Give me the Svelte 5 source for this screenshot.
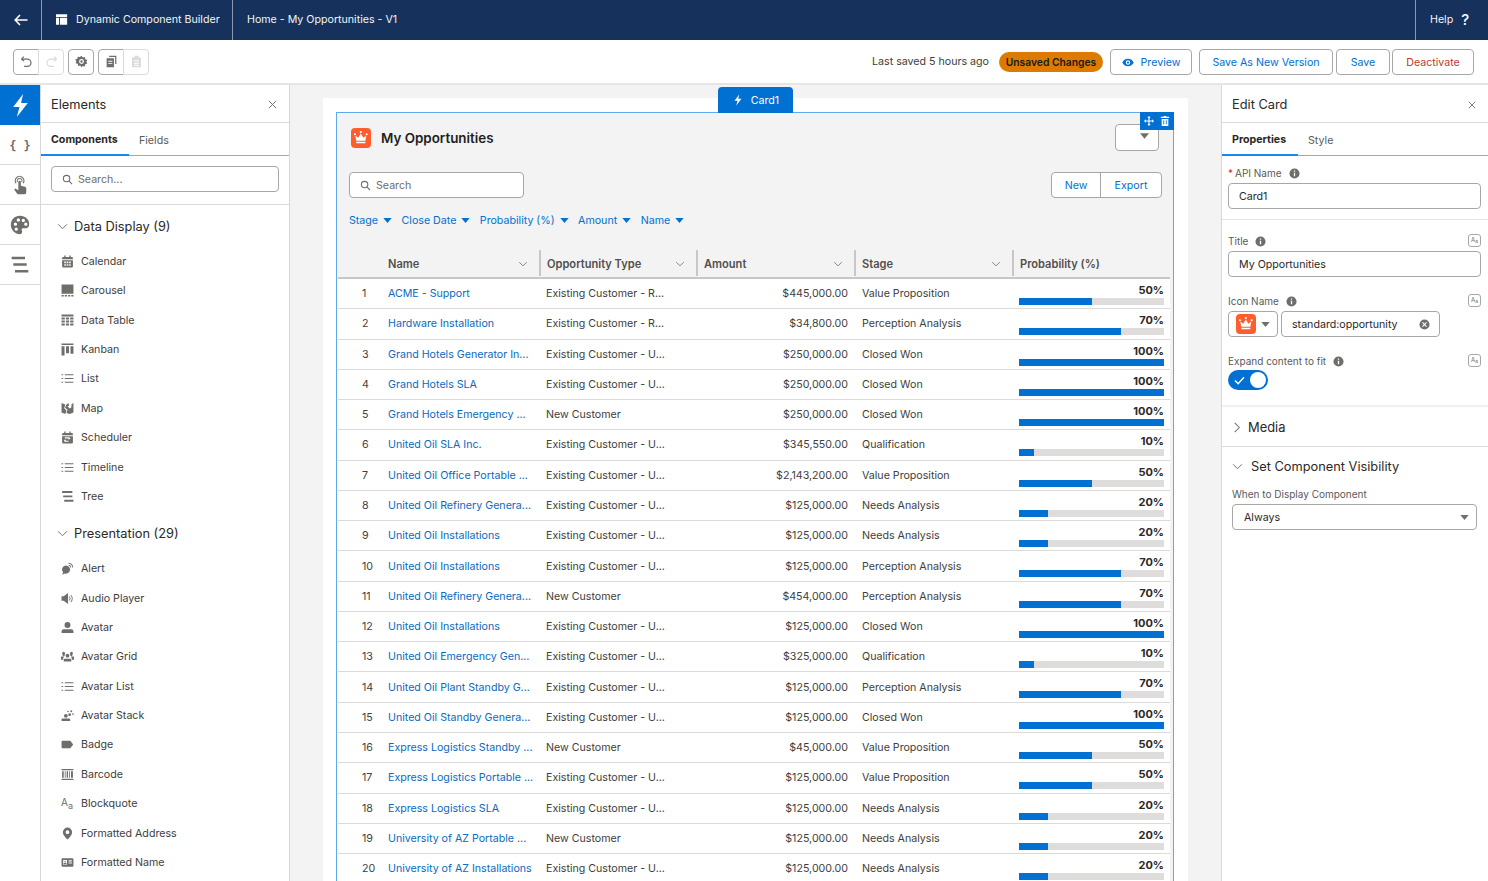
<script>
  const R = 'Existing Customer - R...', U = 'Existing Customer - U...', N = 'New Customer';
  const rows = [
    ['ACME - Support', R, '$445,000.00', 'Value Proposition', 50],
    ['Hardware Installation', R, '$34,800.00', 'Perception Analysis', 70],
    ['Grand Hotels Generator In...', U, '$250,000.00', 'Closed Won', 100],
    ['Grand Hotels SLA', U, '$250,000.00', 'Closed Won', 100],
    ['Grand Hotels Emergency ...', N, '$250,000.00', 'Closed Won', 100],
    ['United Oil SLA Inc.', U, '$345,550.00', 'Qualification', 10],
    ['United Oil Office Portable ...', U, '$2,143,200.00', 'Value Proposition', 50],
    ['United Oil Refinery Genera...', U, '$125,000.00', 'Needs Analysis', 20],
    ['United Oil Installations', U, '$125,000.00', 'Needs Analysis', 20],
    ['United Oil Installations', U, '$125,000.00', 'Perception Analysis', 70],
    ['United Oil Refinery Genera...', N, '$454,000.00', 'Perception Analysis', 70],
    ['United Oil Installations', U, '$125,000.00', 'Closed Won', 100],
    ['United Oil Emergency Gen...', U, '$325,000.00', 'Qualification', 10],
    ['United Oil Plant Standby G...', U, '$125,000.00', 'Perception Analysis', 70],
    ['United Oil Standby Genera...', U, '$125,000.00', 'Closed Won', 100],
    ['Express Logistics Standby ...', N, '$45,000.00', 'Value Proposition', 50],
    ['Express Logistics Portable ...', U, '$125,000.00', 'Value Proposition', 50],
    ['Express Logistics SLA', U, '$125,000.00', 'Needs Analysis', 20],
    ['University of AZ Portable ...', N, '$125,000.00', 'Needs Analysis', 20],
    ['University of AZ Installations', U, '$125,000.00', 'Needs Analysis', 20]
  ];
  const lines = 'M1 4h3v2H1zM7 4h16v2H7zM1 11h3v2H1zM7 11h16v2H7zM1 18h3v2H1zM7 18h16v2H7z';
  const bars = 'M2 2h19v3.5H2zM4 10h17v3.5H4zM6 18h17v3.5H6z';
  const icons = {
    calendar: 'M6 1h2.5v2.5h7V1H18v2.5h2a2 2 0 0 1 2 2V8H2V5.500a2 2 0 0 1 2-2h2zM2 9.500h20V21a2 2 0 0 1-2 2H4a2 2 0 0 1-2-2zM6 12v3h3v-3zM10.500 12v3h3v-3zM15 12v3h3v-3zM6 17v3h3v-3zM10.500 17v3h3v-3zM15 17v3h3v-3z',
    carousel: 'M1 1h22v17H1zM1 20.500h4V23H1zM7 20.500h4V23H7zM13 20.500h4V23h-4zM19 20.500h4V23h-4z',
    table: 'M1 1h22v3.500H1zM1 6.500h6V10H1zM9 6.500h6V10H9zM17 6.500h6V10h-6zM1 12h6v3.500H1zM9 12h6v3.500H9zM17 12h6v3.500h-6zM1 17.500h6V21H1zM9 17.500h6V21H9zM17 17.500h6V21h-6z',
    kanban: 'M1 1h22v2.500H1zM1 6h5.500v17H1zM9.300 6h5.500v13H9.300zM17.500 6H23v14h-5.500z',
    list: lines,
    map: 'M1 2l7 2.500-2 7 4 4-2 6.500-7-2.500zM10 4.500l4-2 1 4.500-3 1 4 4 3-2 .5-6L23 2v17.500L16 22l-6-1.500 2-6-4.500-4z',
    scheduler: 'M6 1h2.500v2.500h7V1H18v2.500h2a2 2 0 0 1 2 2V8H2V5.500a2 2 0 0 1 2-2h2zM2 9.500h20V21a2 2 0 0 1-2 2H4a2 2 0 0 1-2-2zM7 11.500v2.500h7v2.500l4-3.500-4-1.500zM6 16v4h8v-2H9v-2z',
    tree: bars,
    alert: 'M9 6.500a8 7.500 0 1 1-2.500 14.700L2.500 23.500l1.200-4.500A7.500 7.500 0 0 1 9 6.500zM14 1.500a9 9 0 0 1 8.500 8.500l-1.800.2A7.200 7.200 0 0 0 14 3.300zM14 5a5.500 5.500 0 0 1 5 5l-1.800.2A3.800 3.800 0 0 0 14 6.800z',
    audio: 'M1 8h4l8-6v20l-8-6H1zM15.500 8a5 5 0 0 1 0 8l-1-1.300a3.500 3.500 0 0 0 0-5.400zM18.500 5a9.500 9.500 0 0 1 0 14l-1-1.200a8 8 0 0 0 0-11.600z',
    avatar: 'M12 2a5.500 5.500 0 1 1 0 11 5.500 5.500 0 0 1 0-11zM5 15h14a4 4 0 0 1 4 4v3H1v-3a4 4 0 0 1 4-4z',
    grid: 'M12 7a3.500 3.500 0 1 1 0 7 3.500 3.500 0 0 1 0-7zM7 16h10a2 2 0 0 1 2 2v3H5v-3a2 2 0 0 1 2-2zM4.500 3a3 3 0 0 1 3 3l-1 5H3.500L2 6a3 3 0 0 1 2.500-3zM0 12h6l-2 3v3H0zM19.500 3a3 3 0 0 1 2.500 3l-1.500 5h-3l-1-5a3 3 0 0 1 3-3zM18 12h6v6h-4v-3z',
    stack: 'M9 9a3.500 3.500 0 1 1 0 7 3.500 3.500 0 0 1 0-7zM3 17.500h12a2 2 0 0 1 2 2V22H1v-2.500a2 2 0 0 1 2-2zM16 8a2.500 2.500 0 1 1 0 5 2.500 2.500 0 0 1 0-5zM19 2.500a1.800 1.800 0 1 1 0 3.600 1.800 1.800 0 0 1 0-3.600zM22 8a1.500 1.500 0 1 1 0 3 1.500 1.500 0 0 1 0-3zM13 3a1.500 1.500 0 1 1 0 3 1.500 1.500 0 0 1 0-3z',
    badge: 'M3 5h13a2 2 0 0 1 1.500.7l5 6.300-5 6.300a2 2 0 0 1-1.500.7H3a2 2 0 0 1-2-2V7a2 2 0 0 1 2-2z',
    barcode: 'M1 2h22v2H1zM1 20h22v2H1zM2 6h3v12H2zM7 6h1.500v12H7zM10.500 6H13v12h-2.500zM15 6h1.500v12H15zM18.500 6H22v12h-3.500z',
    pin: 'M12 1a8.500 8.500 0 0 1 8.500 8.500C20.500 15 14 21 12 23 10 21 3.500 15 3.500 9.500A8.500 8.500 0 0 1 12 1zM12 6a3.500 3.500 0 1 0 0 7 3.500 3.500 0 0 0 0-7z',
    name: 'M3 4h18a2 2 0 0 1 2 2v12a2 2 0 0 1-2 2H3a2 2 0 0 1-2-2V6a2 2 0 0 1 2-2zM4 7.500V16h7V7.500zM14 8v2h6V8zM14 12v2h6v-2zM7.500 9a1.500 1.500 0 1 1 0 3 1.500 1.500 0 0 1 0-3zM5 13h5v2H5z'
  };
  const dataDisplay = [['Calendar','calendar'],['Carousel','carousel'],['Data Table','table'],['Kanban','kanban'],['List','list'],['Map','map'],['Scheduler','scheduler'],['Timeline','list'],['Tree','tree']];
  const presentation = [['Alert','alert'],['Audio Player','audio'],['Avatar','avatar'],['Avatar Grid','grid'],['Avatar List','list'],['Avatar Stack','stack'],['Badge','badge'],['Barcode','barcode'],['Blockquote',null],['Formatted Address','pin'],['Formatted Name','name']];
  const bolt = 'M14.500 1 5 13.500h6L8.500 23 19 9.500h-6.500z';
  const filters = ['Stage','Close Date','Probability (%)','Amount','Name'];
  const cols = ['Name','Opportunity Type','Amount','Stage','Probability (%)'];
</script>

{#snippet crown(cls)}
  <span class="crown {cls}">
    <svg viewBox="0 0 24 24"><path fill="#fff" d="M3.500 8.500L8 12l4-6.500L16 12l4.500-3.500L19 16.500H5zM5 18h14v2.500H5zM12 1.500a1.700 1.700 0 1 1 0 3.400 1.700 1.700 0 0 1 0-3.400zM3 5a1.600 1.600 0 1 1 0 3.200A1.600 1.600 0 0 1 3 5zM21 5a1.600 1.600 0 1 1 0 3.200A1.600 1.600 0 0 1 21 5z"/></svg>
  </span>
{/snippet}
{#snippet search()}
  <svg class="search-ico" viewBox="0 0 24 24"><circle cx="10" cy="10" r="7" fill="none" stroke="#706e6b" stroke-width="2.400"/><path d="M15 15l7 7" stroke="#706e6b" stroke-width="2.400"/></svg>
{/snippet}
{#snippet chev(cls)}
  <svg class="chev {cls}" viewBox="0 0 12 8"><path d="M1 1.500l5 5 5-5" fill="none" stroke="#706e6b" stroke-width="1.100"/></svg>
{/snippet}
{#snippet caret(cls)}
  <svg class="caret {cls}" viewBox="0 0 10 6"><path d="M0 0h10L5 6z"/></svg>
{/snippet}
{#snippet info()}
  <svg class="info" viewBox="0 0 12 12"><circle cx="6" cy="6" r="5.500" fill="#706e6b"/><path d="M5.300 5.200h1.400v3.800H5.300zM5.300 2.800h1.400v1.400H5.300z" fill="#fff"/></svg>
{/snippet}
{#snippet fx()}
  <span class="fx"><span>A</span><span class="fx-s">a</span></span>
{/snippet}
{#snippet close(cls)}
  <svg class="close {cls}" viewBox="0 0 10 10"><path d="M1 1l8 8M9 1L1 9" stroke="#706e6b" stroke-width="1.100"/></svg>
{/snippet}
{#snippet items(list)}
  <ul class="items">
    {#each list as [label, ic]}
      <li>
        {#if ic}
          <svg class="item-ico" viewBox="0 0 24 24"><path fill="#706e6b" fill-rule="evenodd" d={icons[ic]}/></svg>
        {:else}
          <span class="aa"><span>A</span><span class="aa-s">a</span></span>
        {/if}
        <span>{label}</span>
      </li>
    {/each}
  </ul>
{/snippet}

<div class="app">
  <header class="topbar">
    <button class="back" aria-label="Back">
      <svg viewBox="0 0 14 12"><path d="M6 1L1.200 6 6 11M1.500 6H13.500" fill="none" stroke="#fff" stroke-width="1.600"/></svg>
    </button>
    <div class="app-name">
      <svg viewBox="0 0 14 12"><path fill="#fff" fill-rule="evenodd" d="M0 0h13v3H0zM0 4h3.500v8H0zM4.500 4H13v8H4.500z"/></svg>
      <span>Dynamic Component Builder</span>
    </div>
    <div class="page-name">Home - My Opportunities - V1</div>
    <div class="help"><span>Help</span><span class="q">?</span></div>
  </header>

  <div class="toolbar">
    <div class="tool-left">
      <div class="btn-group">
        <button class="tool" aria-label="Undo"><svg viewBox="0 0 16 16"><path d="M4.500 2L2 5l3 2.500M2.500 5H9a4.500 4.500 0 0 1 0 9H5" fill="none" stroke="#706e6b" stroke-width="1.500"/></svg></button>
        <button class="tool off" aria-label="Redo"><svg viewBox="0 0 16 16"><path d="M11.500 2L14 5l-3 2.500M13.500 5H7a4.500 4.500 0 0 0 0 9h4" fill="none" stroke="#dddbda" stroke-width="1.500"/></svg></button>
      </div>
      <button class="tool solo" aria-label="Settings"><svg viewBox="0 0 16 16"><path fill="#706e6b" fill-rule="evenodd" d="M8 .8l1.500 2.200 2.600-.4.500 2.600 2.600 .8-1.200 2.300 1.200 2.300-2.600.8-.5 2.600-2.600-.4L8 15.200l-1.500-2.200-2.600.4-.5-2.600-2.600-.8L1.500 7.700.3 5.400l2.600-.8.500-2.600 2.600.4zM8 5a3 3 0 1 0 0 6 3 3 0 0 0 0-6zm0 1.500a1.500 1.500 0 1 1 0 3 1.500 1.500 0 0 1 0-3z"/></svg></button>
      <div class="btn-group">
        <button class="tool" aria-label="Copy"><svg viewBox="0 0 16 16"><path fill="#706e6b" fill-rule="evenodd" d="M5 1h9v10h-1.500V2.500H5zM2 4h9v11H2zM4 7v1.200h5V7zM4 10v1.200h5V10z"/></svg></button>
        <button class="tool off" aria-label="Paste"><svg viewBox="0 0 16 16"><path fill="#dddbda" fill-rule="evenodd" d="M5.500 1h5v2h3v12h-11V3h3zM5 6.500v1.200h6V6.500zM5 9.500v1.200h6V9.500zM5 12v1.200h6V12z"/></svg></button>
      </div>
    </div>
    <div class="tool-right">
      <span class="saved">Last saved 5 hours ago</span>
      <span class="unsaved">Unsaved Changes</span>
      <button class="btn preview"><svg viewBox="0 0 16 12"><path fill="#0070d2" fill-rule="evenodd" d="M8 1c3.500 0 6.300 2.200 7.500 5-1.200 2.800-4 5-7.500 5S1.700 8.800.5 6C1.700 3.200 4.500 1 8 1zm0 2a3 3 0 1 0 0 6 3 3 0 0 0 0-6zm0 1.500a1.500 1.500 0 1 1 0 3 1.500 1.500 0 0 1 0-3z"/></svg>Preview</button>
      <button class="btn saveas">Save As New Version</button>
      <button class="btn save">Save</button>
      <button class="btn deact">Deactivate</button>
    </div>
  </div>

  <div class="main">
    <nav class="rail">
      <div class="rail-item active"><svg class="bolt" viewBox="0 0 24 24"><path fill="#fff" d={bolt}/></svg></div>
      <div class="rail-item"><span class="braces">{'{ }'}</span></div>
      <div class="rail-item"><svg viewBox="0 0 24 24"><path fill="#706e6b" fill-rule="evenodd" d="M11.500 7a1.500 1.500 0 0 1 1.500 1.500V13l5 1.200a2 2 0 0 1 1.500 2V21a2 2 0 0 1-2 2H10a2 2 0 0 1-1.600-.800L5 17.500l1.200-1.200 3.800 2V8.500A1.500 1.500 0 0 1 11.500 7zM11.500 1a6 6 0 0 1 5 9.300l-1.300-.8a4.500 4.500 0 1 0-7.400 0l-1.300.8A6 6 0 0 1 11.500 1zM11.500 3.500a3.500 3.500 0 0 1 3 5.300l-1-.7a2.300 2.300 0 1 0-4 0l-1 .7a3.500 3.500 0 0 1 3-5.300z"/></svg></div>
      <div class="rail-item"><svg viewBox="0 0 24 24"><path fill="#706e6b" fill-rule="evenodd" d="M12 1c6.500 0 11 4.500 11 10 0 3.500-2.500 5-5 5h-2.500c-1.500 0-2 1.500-1.200 2.700.8 1.300.2 4.300-2.300 4.300C6 23 1 18 1 12S5.500 1 12 1zM6.500 9a2 2 0 1 0 0 4 2 2 0 0 0 0-4zM10 4a2 2 0 1 0 0 4 2 2 0 0 0 0-4zM16 4.500a2 2 0 1 0 0 4 2 2 0 0 0 0-4zM19 9a2 2 0 1 0 0 4 2 2 0 0 0 0-4zM7.500 15a2 2 0 1 0 0 4 2 2 0 0 0 0-4z"/></svg></div>
      <div class="rail-item"><svg viewBox="0 0 24 24"><path fill="#706e6b" d="M2 2h16v3H2zM4 10h16v3H4zM6 18h16v3H6z"/></svg></div>
    </nav>

    <aside class="elements">
      <div class="panel-head"><h2>Elements</h2>{@render close('')}</div>
      <div class="tabs"><span class="tab on comp">Components</span><span class="tab">Fields</span></div>
      <div class="el-search">
        <div class="input">{@render search()}<span class="ph">Search...</span></div>
      </div>
      <div class="el-list">
        <div class="section">{@render chev('sec')}<span>Data Display (9)</span></div>
        {@render items(dataDisplay)}
        <div class="section second">{@render chev('sec')}<span>Presentation (29)</span></div>
        {@render items(presentation)}
      </div>
    </aside>

    <section class="canvas">
      <div class="sheet">
        <div class="card">
          <div class="card-tab"><svg viewBox="0 0 24 24"><path fill="#fff" d={bolt}/></svg>Card1</div>
          <div class="card-actions">
            <svg viewBox="0 0 12 12"><path fill="#fff" d="M6 0l2 2.200H6.700v3.100h3.100V4L12 6 9.800 8V6.700H6.700v3.100H8L6 12 4 9.800h1.300V6.700H2.200V8L0 6l2.200-2v1.300h3.100V2.200H4z"/></svg>
            <svg viewBox="0 0 12 12"><path fill="#fff" fill-rule="evenodd" d="M4.500 0h3v1H11v1.500H1V1h3.500zM2 3.500h8V12H2zM4 5v5h1V5zM7 5v5h1V5z"/></svg>
          </div>
          <div class="card-head">
            {@render crown('big')}
            <h3>My Opportunities</h3>
            <div class="menu-btn">{@render caret('menu-caret')}</div>
          </div>
          <div class="card-tools">
            <div class="input card-search">{@render search()}<span class="ph">Search</span></div>
            <div class="new-export"><span>New</span><span>Export</span></div>
          </div>
          <div class="filters">
            {#each filters as f}
              <span class="filter">{f}{@render caret('blue')}</span>
            {/each}
          </div>
          <div class="table">
            <div class="thead">
              <div class="th num"></div>
              {#each cols as c, i}
                <div class="th" class:sep={i > 0}>
                  <span>{c}</span>
                  {#if i < 4}{@render chev('th-chev')}{/if}
                </div>
              {/each}
            </div>
            {#each rows as r, i}
              <div class="tr">
                <div class="td num">{i + 1}</div>
                <div class="td link">{r[0]}</div>
                <div class="td">{r[1]}</div>
                <div class="td amount">{r[2]}</div>
                <div class="td stage">{r[3]}</div>
                <div class="td prob">
                  <span class="pct">{r[4]}%</span>
                  <span class="bar"><span class="fill" style="width:{r[4]}%"></span></span>
                </div>
              </div>
            {/each}
          </div>
        </div>
      </div>
    </section>

    <aside class="props">
      <div class="panel-head right"><h2>Edit Card</h2>{@render close('small')}</div>
      <div class="tabs right"><span class="tab on prop">Properties</span><span class="tab">Style</span></div>
      <div class="group first">
        <div class="label"><span class="req">*</span>API Name {@render info()}</div>
        <div class="input val">Card1</div>
      </div>
      <div class="group second">
        <div class="label spread"><span class="lab">Title {@render info()}</span>{@render fx()}</div>
        <div class="input val">My Opportunities</div>
        <div class="label spread icon-label"><span class="lab">Icon Name {@render info()}</span>{@render fx()}</div>
        <div class="icon-row">
          <div class="icon-pick">{@render crown('mid')}{@render caret('')}</div>
          <div class="input icon-val"><span>standard:opportunity</span>
            <svg class="clear" viewBox="0 0 12 12"><circle cx="6" cy="6" r="5.500" fill="#706e6b"/><path d="M3.800 3.800l4.400 4.400M8.200 3.800L3.800 8.200" stroke="#fff" stroke-width="1.200"/></svg>
          </div>
        </div>
        <div class="label spread expand"><span class="lab">Expand content to fit {@render info()}</span>{@render fx()}</div>
        <div class="toggle">
          <svg viewBox="0 0 12 10"><path d="M1 5l3.500 3.500L11 1.500" fill="none" stroke="#fff" stroke-width="1.600"/></svg>
          <span class="knob"></span>
        </div>
      </div>
      <div class="media">
        <svg class="media-chev" viewBox="0 0 8 12"><path d="M1.500 1l5 5-5 5" fill="none" stroke="#706e6b" stroke-width="1.100"/></svg>
        <span>Media</span>
      </div>
      <div class="visibility">
        <div class="vis-head">{@render chev('sec')}<span>Set Component Visibility</span></div>
        <div class="label when">When to Display Component</div>
        <div class="input select"><span>Always</span>{@render caret('')}</div>
      </div>
    </aside>
  </div>
</div>

<style>
  :global(body) { margin: 0; background: #fff; }
  * { box-sizing: border-box; }
  .app {
    height: 881px; width: 1488px; overflow: hidden; display: flex; flex-direction: column;
    font-family: Inter, "Liberation Sans", sans-serif; font-size: 10.650px; color: #3e3e3c;
  }
  button { font: inherit; background: #fff; cursor: pointer; padding: 0; }
  h2, h3 { margin: 0; font-weight: 400; }
  ul { list-style: none; margin: 0; padding: 0; }

  .topbar { height: 40px; background: #16325c; color: #f3f2f2; display: flex; align-items: stretch; flex: none; }
  .back { width: 42px; background: none; border: 0; border-right: 1px solid #8a99b0; display: flex; align-items: center; justify-content: center; }
  .back svg { width: 14px; height: 12px; }
  .app-name { width: 191px; display: flex; align-items: center; gap: 8px; padding: 0 0 2px 14px; border-right: 1px solid #8a99b0; }
  .app-name svg { width: 12px; height: 11px; }
  .page-name { flex: 1; display: flex; align-items: center; padding: 0 0 2px 14px; }
  .help { width: 73px; border-left: 1px solid #8a99b0; display: flex; align-items: center; padding: 0 0 2px 14px; gap: 8px; }
  .q { font-size: 15px; font-weight: 500; color: #fff; }

  .toolbar { height: 45px; flex: none; display: flex; align-items: center; justify-content: space-between; padding: 0 14px 0 13px; border-bottom: 2px solid #e5e5e5; }
  .tool-left { display: flex; gap: 4px; }
  .btn-group { display: flex; }
  .tool { width: 26px; height: 26px; border: 1px solid #a8a7a5; border-radius: 4px; display: flex; align-items: center; justify-content: center; }
  .tool svg { width: 13px; height: 13px; }
  .btn-group .tool:first-child { border-radius: 4px 0 0 4px; }
  .btn-group .tool:last-child { border-radius: 0 4px 4px 0; margin-left: -1px; }
  .tool.off { border-color: #dddbda; }
  .tool-right { display: flex; align-items: center; }
  .saved { margin-right: 10px; }
  .unsaved { width: 104px; height: 20px; border-radius: 10px; background: #dd7a01; color: #1a1a1a; font-weight: 600; display: flex; align-items: center; justify-content: center; margin-right: 7px; font-size: 10.300px; }
  .btn { height: 26px; border: 1px solid #a8a7a5; border-radius: 4px; color: #0070d2; display: flex; align-items: center; justify-content: center; padding-top: 1px; }
  .preview { width: 82px; gap: 7px; margin-right: 7px; }
  .preview svg { width: 12px; height: 9px; }
  .saveas { width: 134px; margin-right: 3px; }
  .save { width: 54px; margin-right: 2px; }
  .deact { width: 82px; color: #c23934; }

  .main { flex: 1; display: flex; min-height: 0; }
  .rail { width: 41px; flex: none; border-right: 1px solid #d8d8d8; display: flex; flex-direction: column; }
  .rail-item { width: 40px; height: 40px; border-bottom: 1px solid #dddbda; display: flex; align-items: center; justify-content: center; }
  .rail-item svg { width: 20px; height: 20px; }
  .rail-item svg.bolt { width: 25px; height: 25px; }
  .rail-item.active { background: #0070d2; border: 0; }
  .braces { font-family: "DejaVu Sans Mono", monospace; font-weight: 700; font-size: 12px; color: #706e6b; padding-top: 2px; }

  .elements { width: 249px; flex: none; border-right: 1px solid #d8d8d8; display: flex; flex-direction: column; }
  .panel-head { height: 38px; padding: 2px 12px 0 10px; border-bottom: 1px solid #dddbda; display: flex; align-items: center; justify-content: space-between; flex: none; }
  .panel-head h2 { font-size: 12.800px; color: #2b2826; }
  .close { width: 9px; height: 9px; }
  .close.small { width: 8px; height: 8px; }
  .tabs { height: 33px; border-bottom: 1px solid #a8a7a5; display: flex; flex: none; color: #5a5a58; }
  .tab { height: 33px; display: flex; align-items: center; padding: 2px 0 0 10px; }
  .tab.on { font-weight: 700; color: #2b2826; border-bottom: 2px solid #1589ee; }
  .tab.comp { width: 88px; }
  .tab.prop { width: 76px; }
  .input { height: 26px; border: 1px solid #a8a7a5; border-radius: 4px; background: #fff; display: flex; align-items: center; }
  .search-ico { width: 11px; height: 11px; margin: 0 5px 0 10px; }
  .ph { color: #706e6b; }
  .el-search { height: 49px; padding: 10px 10px 0; border-bottom: 1px solid #dddbda; flex: none; }
  .el-list { padding-left: 16px; flex: 1; overflow: hidden; }
  .section { display: flex; align-items: center; gap: 6px; font-size: 12.800px; color: #2b2826; height: 20px; margin-top: 11px; }
  .section.second { margin-top: 12px; }
  .chev { width: 11px; height: 7px; flex: none; }
  .section + .items { margin-top: 10.500px; }
  .items li { height: 29.450px; display: flex; align-items: center; gap: 8px; padding-left: 4px; }
  .section.second + .items { margin-top: 10.500px; }
  .section.second + .items li { height: 29.400px; }
  .item-ico { width: 13px; height: 13px; flex: none; margin-right: -1px; }
  .aa { width: 12px; height: 14px; display: flex; color: #706e6b; font-size: 10px; line-height: 10px; flex: none; }
  .aa-s { align-self: flex-end; font-size: 9px; }

  .canvas { width: 931px; flex: none; background: #f3f3f3; padding: 13px 33px 0 33px; overflow: hidden; }
  .sheet { background: #fff; height: 800px; padding: 14px 14px 0 13px; }
  .card { position: relative; height: 790px; background: #f3f3f3; border: 1.500px solid #5eaaee; padding: 0 2px 0 1px; }
  .card-tab { position: absolute; left: 381px; top: -26px; width: 75px; height: 26px; background: #0070d2; border-radius: 4px 4px 0 0; color: #fff; display: flex; align-items: center; justify-content: center; gap: 7px; }
  .card-tab svg { width: 12px; height: 12px; }
  .card-actions { position: absolute; right: -1px; top: -1px; width: 34px; height: 18px; background: #0070d2; display: flex; align-items: center; justify-content: center; gap: 6px; z-index: 1; }
  .card-actions svg { width: 10px; height: 10px; }
  .card-head { height: 57px; padding: 0 12px 0 13px; display: flex; align-items: center; }
  .crown { background: #ff5d2d; border-radius: 4px; display: flex; align-items: center; justify-content: center; flex: none; }
  .crown svg { width: 78%; height: 78%; }
  .crown.big { width: 20px; height: 20px; margin-top: -8px; }
  .crown.mid { width: 20px; height: 20px; }
  .card-head h3 { font-size: 13.400px; font-weight: 600; color: #1f1f1e; margin-left: 10px; flex: 1; margin-top: -8px; }
  .menu-btn { width: 44px; height: 27px; border: 1px solid #a8a7a5; border-radius: 4px; background: #fff; display: flex; align-items: center; justify-content: flex-end; padding: 0 9px 4px 0; margin-top: -8px; }
  .caret { width: 9px; height: 5px; fill: #706e6b; flex: none; }
  .menu-caret { width: 9px; height: 6px; }
  .card-tools { display: flex; justify-content: space-between; padding: 2px 9px 0 11px; }
  .card-search { width: 175px; }
  .new-export { display: flex; width: 111px; height: 26px; border: 1px solid #a8a7a5; border-radius: 4px; background: #fff; color: #0070d2; }
  .new-export span { display: flex; align-items: center; justify-content: center; }
  .new-export span:first-child { width: 49px; border-right: 1px solid #a8a7a5; }
  .new-export span:last-child { flex: 1; }
  .filters { display: flex; gap: 9.500px; padding: 0 0 0 11px; height: 44px; align-items: center; color: #0070d2; }
  .filter { display: flex; align-items: center; gap: 5px; }
  .caret.blue { fill: #0070d2; }
  .table { margin-top: 8px; width: 832px; }
  .thead, .tr { display: grid; grid-template-columns: 42px 159px 157px 158px 158px 158px; }
  .thead { height: 29px; border-bottom: 2px solid #c9c7c5; }
  .th { display: flex; align-items: center; justify-content: space-between; font-weight: 600; font-size: 11.100px; color: #514f4d; padding: 0 11px 0 8px; position: relative; }
  .th.sep::before { content: ""; position: absolute; left: 0; top: 0; bottom: 1px; width: 1.500px; background: #c9c7c5; }
  .th.num { padding: 0; }
  .th-chev { width: 10px; height: 6px; }
  .tr { height: 30.280px; background: #fff; border-bottom: 1px solid #dddbda; }
  .td { display: flex; align-items: center; padding: 0 7px; white-space: nowrap; color: #3e3e3c; }
  .td.num { justify-content: flex-start; padding: 0 0 0 24px; }
  .td.link { color: #0b6ac0; padding-left: 8px; }
  .td.amount { justify-content: flex-end; padding-right: 6px; }
  .td.stage { padding-left: 8px; }
  .td.prob { flex-direction: column; align-items: stretch; justify-content: flex-start; padding: 5px 6px 0 7px; }
  .pct { text-align: right; font-weight: 700; color: #2b2826; line-height: 13px; height: 14px; font-size: 11px; }
  .bar { display: block; height: 7px; background: #dfdcdc; }
  .fill { display: block; height: 7px; background: #0070d2; }

  .props { width: 267px; flex: none; border-left: 1px solid #d8d8d8; display: flex; flex-direction: column; }
  .tabs.right { color: #5a5a58; }
  .label { display: flex; align-items: center; color: #5a5a58; font-size: 10px; height: 14px; gap: 4px; }
  .req { color: #c23934; margin-right: -2px; }
  .info { width: 11px; height: 11px; margin-left: 3px; }
  .spread { justify-content: space-between; }
  .lab { display: flex; align-items: center; gap: 4px; }
  .group { padding: 0 7px 0 6px; }
  .group.first { height: 64px; padding-top: 10px; border-bottom: 1px solid #e5e5e5; }
  .val { margin-top: 3px; padding-left: 10px; color: #2b2826; }
  .group.second { height: 187px; border-bottom: 2px solid #f0f0f0; padding-top: 14px; }
  .fx { width: 13px; height: 13px; border: 1px solid #a8a7a5; border-radius: 3px; display: flex; align-items: center; justify-content: center; font-size: 6px; line-height: 6px; color: #706e6b; margin-top: -2px; }
  .fx-s { font-size: 5px; margin-top: 2px; }
  .icon-label { margin-top: 17px; }
  .icon-row { display: flex; gap: 3px; margin-top: 3px; }
  .icon-pick { width: 50px; height: 26px; border: 1px solid #a8a7a5; border-radius: 4px; background: #fff; display: flex; align-items: center; gap: 5px; padding-left: 7px; }
  .icon-val { width: 159px; padding: 0 9px 0 10px; justify-content: space-between; color: #2b2826; }
  .clear { width: 11px; height: 11px; }
  .expand { margin-top: 17px; }
  .toggle { margin-top: 2px; width: 40px; height: 20px; border-radius: 10px; background: #0070d2; position: relative; display: flex; align-items: center; padding-left: 6px; }
  .toggle svg { width: 11px; height: 9px; }
  .knob { position: absolute; right: 2px; top: 2px; width: 16px; height: 16px; border-radius: 50%; background: #fff; }
  .media { height: 40px; border-bottom: 1px solid #dddbda; display: flex; align-items: center; padding: 2px 0 0 11px; gap: 7px; font-size: 12.900px; color: #2b2826; }
  .media-chev { width: 8px; height: 11px; }
  .visibility { padding: 9px 10px 0 10px; }
  .vis-head { display: flex; align-items: center; gap: 8px; font-size: 12.800px; color: #2b2826; height: 20px; }
  .when { margin-top: 11px; }
  .select { margin-top: 3px; width: 245px; padding: 0 7px 0 11px; justify-content: space-between; color: #2b2826; }
</style>
